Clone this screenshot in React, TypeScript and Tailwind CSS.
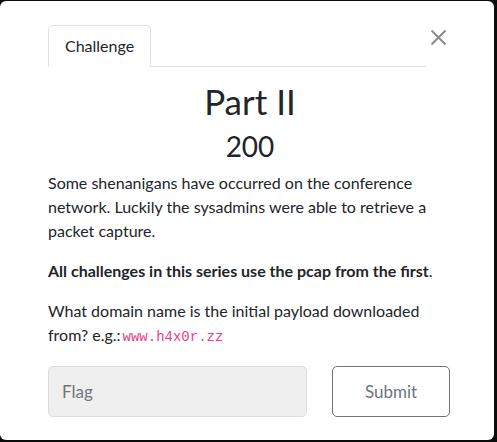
import React from "react";

const lato = { fontFamily: "Lato, 'Liberation Sans', sans-serif" };

const CloseIcon: React.FC = () => (
    <svg width="17" height="17" viewBox="0 0 17 17" fill="none">
        <path d="M1.5 1.5 L15.5 15.5 M15.5 1.5 L1.5 15.5" stroke="#8a8a8a" strokeWidth="2" />
    </svg>
);

export default function App() {
    return (
        <div className="w-[497px] h-[442px] bg-[#0b0b0b] pt-px overflow-hidden" style={lato}>
            <div className="w-[494px] h-[439px] bg-white rounded-[6px] text-[#212529]">
                {/* header with tabs */}
                <div className="flex pt-6 pl-12">
                    <div className="w-[378px] flex border-b border-[#dee2e6]">
                        <div className="-mb-px px-4 py-2 border border-[#dee2e6] border-b-white rounded-t-[5px] bg-white text-[16px] leading-6 text-[#212529]">
                            Challenge
                        </div>
                    </div>
                    <button className="ml-1 mt-1 w-[17px] h-[17px] flex items-center justify-center">
                        <CloseIcon />
                    </button>
                </div>

                <div className="pl-12 w-[452px]">
                    <h2 className="mt-[13px] text-center text-[35px] leading-[42px] font-normal">Part II</h2>
                    <h3 className="mt-[7px] text-center text-[28px] leading-[34px] font-normal">200</h3>

                    <div className="mt-[8px] text-[16px] leading-6">
                        <p className="mb-4">
                            Some shenanigans have occurred on the conference network. Luckily the sysadmins were able to retrieve a packet capture.
                        </p>
                        <p className="mb-4">
                            <b className="font-bold">All challenges in this series use the pcap from the first</b>.
                        </p>
                        <p>
                            What domain name is the initial payload downloaded from? e.g.:<code className="ml-[2px] text-[14px] text-[#e83e8c]" style={{ fontFamily: "'Liberation Mono', monospace" }}>www.h4x0r.zz</code>
                        </p>
                    </div>

                    <div className="mt-[17px] flex">
                        <div className="w-[259px] h-[51px] bg-[#efefef] border border-[#dddddd] rounded-[5px] flex items-center pl-[13px] text-[17px] text-[#6c757d]">
                            Flag
                        </div>
                        <button className="ml-[25px] w-[118px] h-[51px] border border-[#6c757d] rounded-[5px] text-[17px] text-[#6c757d] bg-white">
                            Submit
                        </button>
                    </div>
                </div>
            </div>
        </div>
    );
}
